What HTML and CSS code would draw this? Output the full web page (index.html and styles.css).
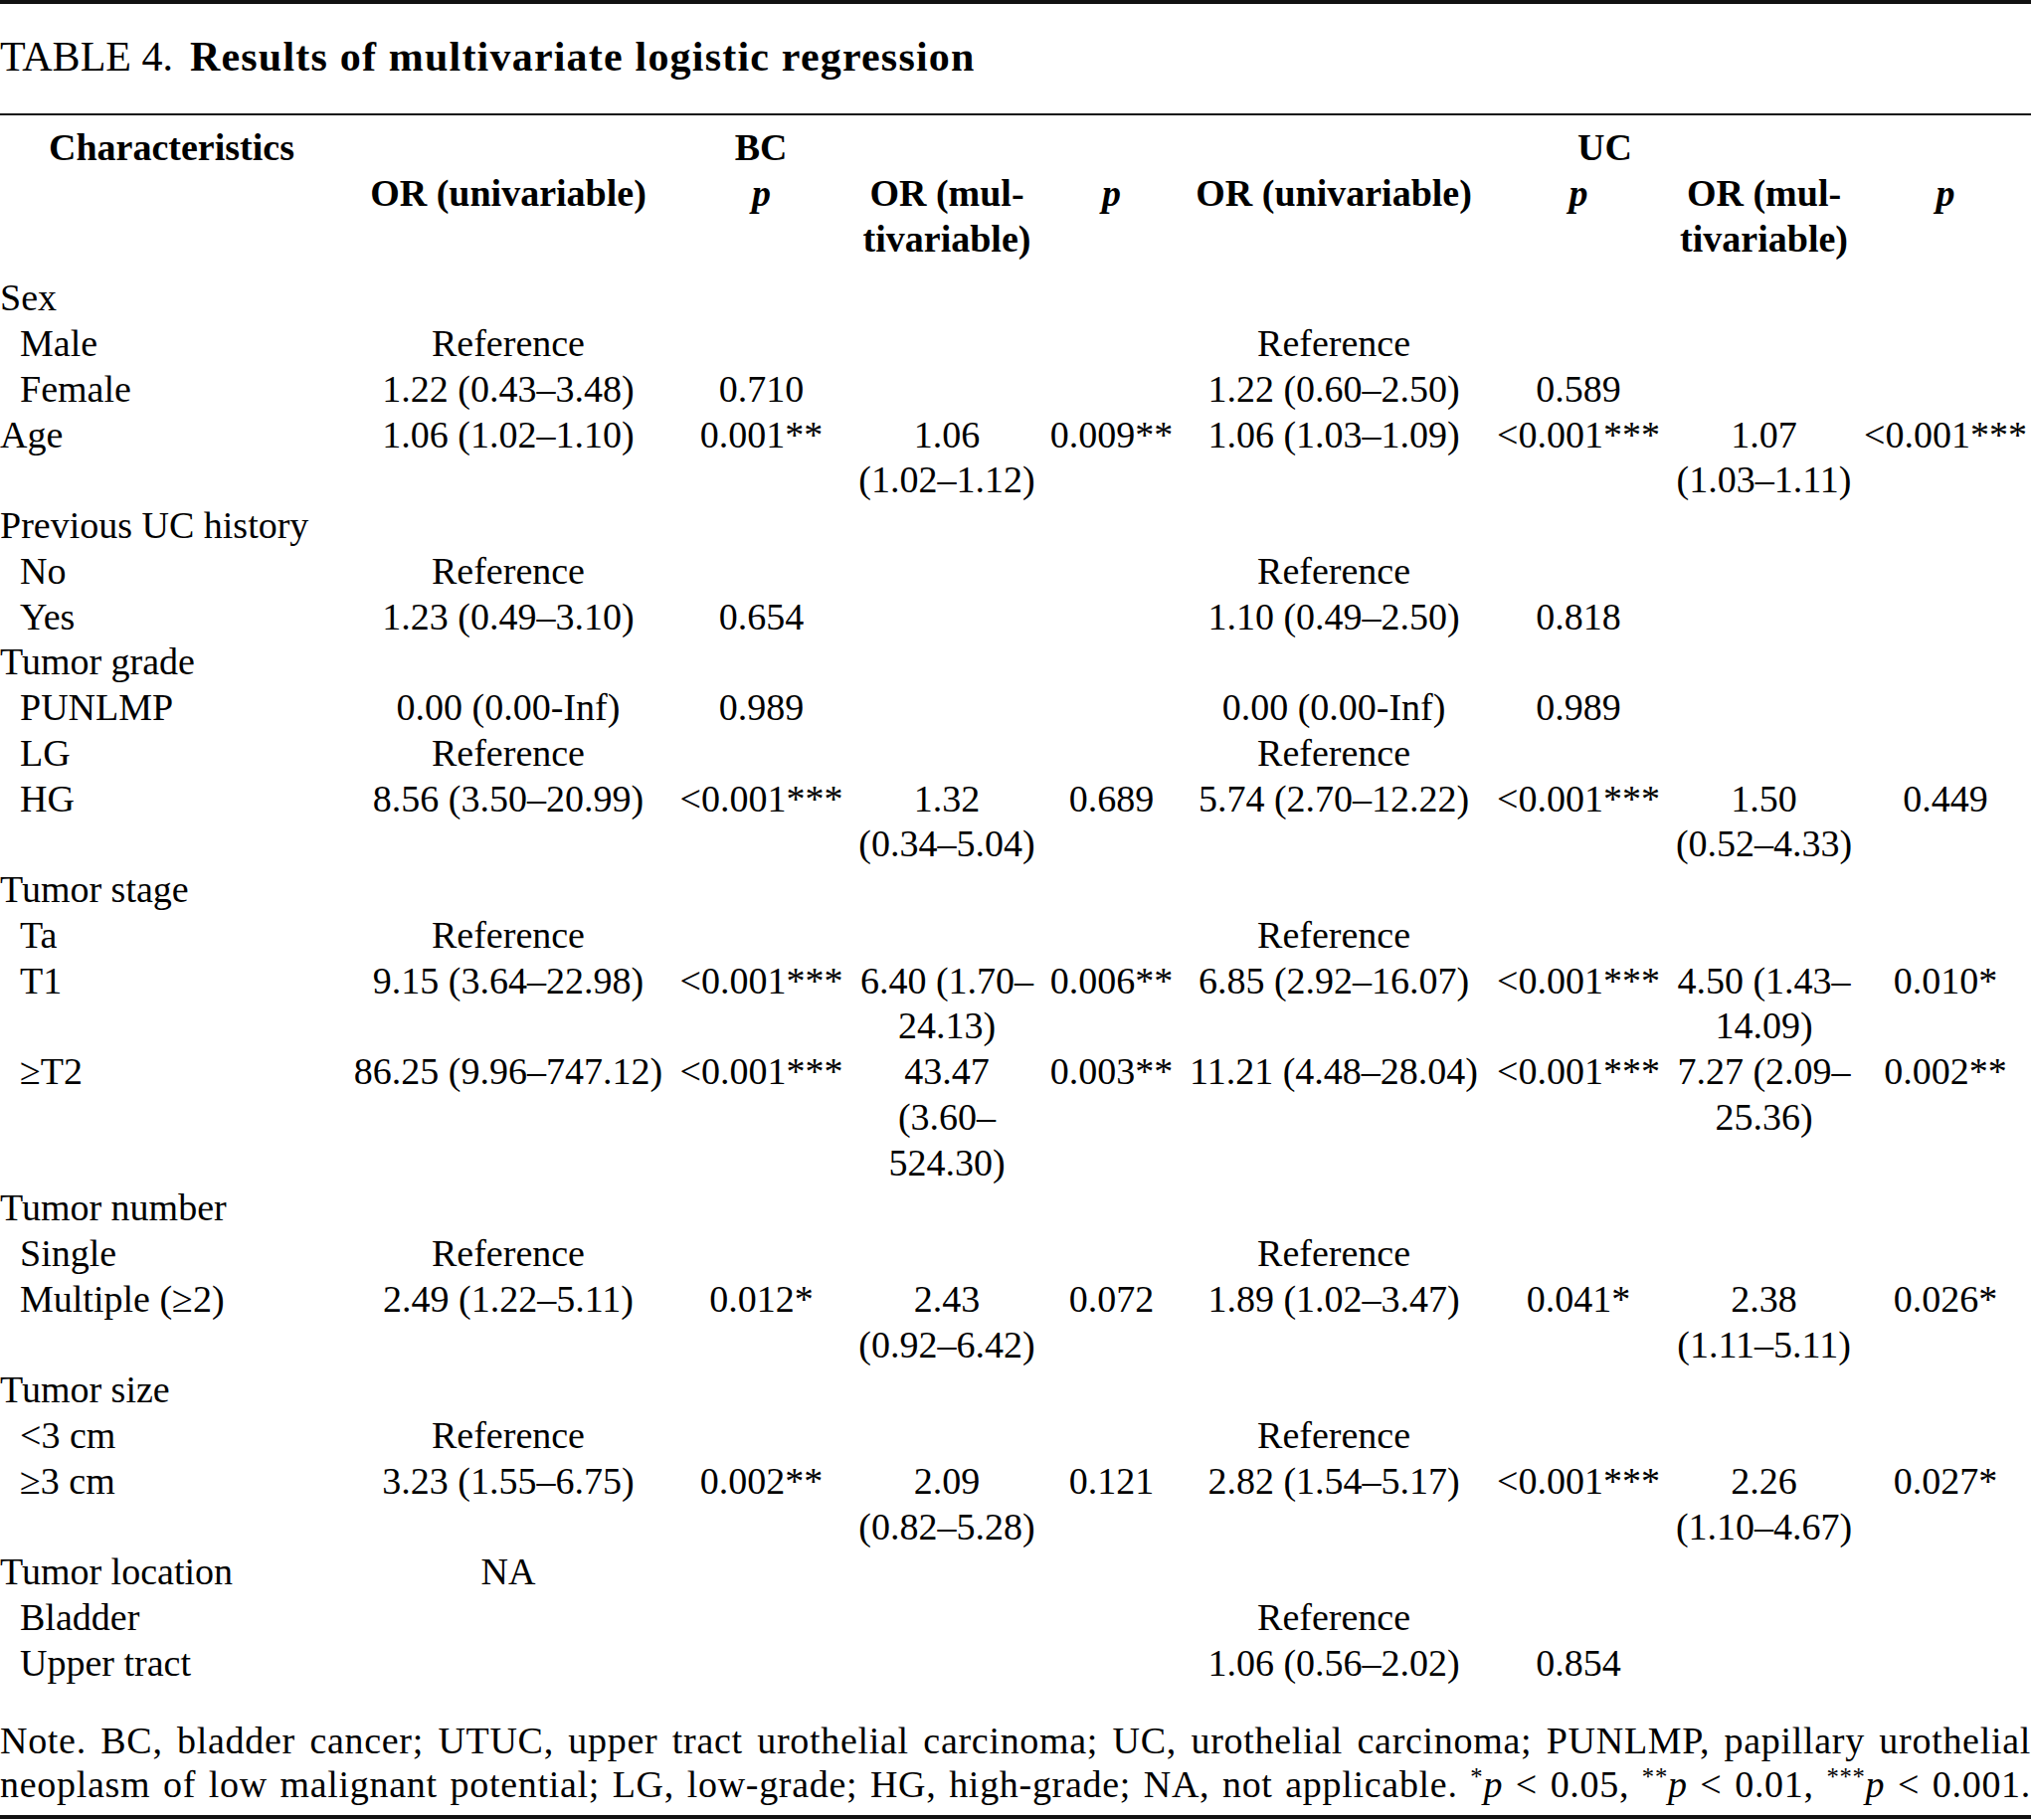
FILE: index.html
```html
<!DOCTYPE html>
<html lang="en">
<head>
<meta charset="utf-8">
<title>Table 4</title>
<link rel="stylesheet" href="styles.css">
</head>
<body>
<div class="tbl-block">
  <div class="caption"><span class="cap-label">TABLE 4.</span><span class="cap-title">Results of multivariate logistic regression</span></div>
  <table class="results">
    <colgroup>
      <col class="c1"><col class="c2"><col class="c3"><col class="c4"><col class="c5">
      <col class="c6"><col class="c7"><col class="c8"><col class="c9">
    </colgroup>
    <thead>
      <tr class="h1">
        <th>Characteristics</th>
        <th colspan="4">BC</th>
        <th colspan="4">UC</th>
      </tr>
      <tr class="h2">
        <th></th>
        <th>OR (univariable)</th>
        <th><i>p</i></th>
        <th>OR (mul-<br>tivariable)</th>
        <th><i>p</i></th>
        <th>OR (univariable)</th>
        <th><i>p</i></th>
        <th>OR (mul-<br>tivariable)</th>
        <th><i>p</i></th>
      </tr>
    </thead>
    <tbody>
      <tr><td>Sex</td><td></td><td></td><td></td><td></td><td></td><td></td><td></td><td></td></tr>
      <tr><td class="sub">Male</td><td>Reference</td><td></td><td></td><td></td><td>Reference</td><td></td><td></td><td></td></tr>
      <tr><td class="sub">Female</td><td>1.22 (0.43–3.48)</td><td>0.710</td><td></td><td></td><td>1.22 (0.60–2.50)</td><td>0.589</td><td></td><td></td></tr>
      <tr><td>Age</td><td>1.06 (1.02–1.10)</td><td>0.001**</td><td>1.06<br>(1.02–1.12)</td><td>0.009**</td><td>1.06 (1.03–1.09)</td><td>&lt;0.001***</td><td>1.07<br>(1.03–1.11)</td><td>&lt;0.001***</td></tr>
      <tr><td>Previous UC history</td><td></td><td></td><td></td><td></td><td></td><td></td><td></td><td></td></tr>
      <tr><td class="sub">No</td><td>Reference</td><td></td><td></td><td></td><td>Reference</td><td></td><td></td><td></td></tr>
      <tr><td class="sub">Yes</td><td>1.23 (0.49–3.10)</td><td>0.654</td><td></td><td></td><td>1.10 (0.49–2.50)</td><td>0.818</td><td></td><td></td></tr>
      <tr><td>Tumor grade</td><td></td><td></td><td></td><td></td><td></td><td></td><td></td><td></td></tr>
      <tr><td class="sub">PUNLMP</td><td>0.00 (0.00-Inf)</td><td>0.989</td><td></td><td></td><td>0.00 (0.00-Inf)</td><td>0.989</td><td></td><td></td></tr>
      <tr><td class="sub">LG</td><td>Reference</td><td></td><td></td><td></td><td>Reference</td><td></td><td></td><td></td></tr>
      <tr><td class="sub">HG</td><td>8.56 (3.50–20.99)</td><td>&lt;0.001***</td><td>1.32<br>(0.34–5.04)</td><td>0.689</td><td>5.74 (2.70–12.22)</td><td>&lt;0.001***</td><td>1.50<br>(0.52–4.33)</td><td>0.449</td></tr>
      <tr><td>Tumor stage</td><td></td><td></td><td></td><td></td><td></td><td></td><td></td><td></td></tr>
      <tr><td class="sub">Ta</td><td>Reference</td><td></td><td></td><td></td><td>Reference</td><td></td><td></td><td></td></tr>
      <tr><td class="sub">T1</td><td>9.15 (3.64–22.98)</td><td>&lt;0.001***</td><td>6.40 (1.70–<br>24.13)</td><td>0.006**</td><td>6.85 (2.92–16.07)</td><td>&lt;0.001***</td><td>4.50 (1.43–<br>14.09)</td><td>0.010*</td></tr>
      <tr><td class="sub">≥T2</td><td>86.25 (9.96–747.12)</td><td>&lt;0.001***</td><td>43.47<br>(3.60–<br>524.30)</td><td>0.003**</td><td>11.21 (4.48–28.04)</td><td>&lt;0.001***</td><td>7.27 (2.09–<br>25.36)</td><td>0.002**</td></tr>
      <tr><td>Tumor number</td><td></td><td></td><td></td><td></td><td></td><td></td><td></td><td></td></tr>
      <tr><td class="sub">Single</td><td>Reference</td><td></td><td></td><td></td><td>Reference</td><td></td><td></td><td></td></tr>
      <tr><td class="sub">Multiple (≥2)</td><td>2.49 (1.22–5.11)</td><td>0.012*</td><td>2.43<br>(0.92–6.42)</td><td>0.072</td><td>1.89 (1.02–3.47)</td><td>0.041*</td><td>2.38<br>(1.11–5.11)</td><td>0.026*</td></tr>
      <tr><td>Tumor size</td><td></td><td></td><td></td><td></td><td></td><td></td><td></td><td></td></tr>
      <tr><td class="sub">&lt;3 cm</td><td>Reference</td><td></td><td></td><td></td><td>Reference</td><td></td><td></td><td></td></tr>
      <tr><td class="sub">≥3 cm</td><td>3.23 (1.55–6.75)</td><td>0.002**</td><td>2.09<br>(0.82–5.28)</td><td>0.121</td><td>2.82 (1.54–5.17)</td><td>&lt;0.001***</td><td>2.26<br>(1.10–4.67)</td><td>0.027*</td></tr>
      <tr><td>Tumor location</td><td>NA</td><td></td><td></td><td></td><td></td><td></td><td></td><td></td></tr>
      <tr><td class="sub">Bladder</td><td></td><td></td><td></td><td></td><td>Reference</td><td></td><td></td><td></td></tr>
      <tr><td class="sub">Upper tract</td><td></td><td></td><td></td><td></td><td>1.06 (0.56–2.02)</td><td>0.854</td><td></td><td></td></tr>
    </tbody>
  </table>
  <p class="note">Note. BC, bladder cancer; UTUC, upper tract urothelial carcinoma; UC, urothelial carcinoma; PUNLMP, papillary urothelial<br>neoplasm of low malignant potential; LG, low-grade; HG, high-grade; NA, not applicable. <sup>*</sup><i>p</i> &lt; 0.05, <sup>**</sup><i>p</i> &lt; 0.01, <sup>***</sup><i>p</i> &lt; 0.001.</p>
</div>
</body>
</html>
```

FILE: styles.css
```css
html, body {
  margin: 0;
  padding: 0;
  background: #fff;
}

body {
  width: 2042px;
  font-family: "Liberation Serif", "Times New Roman", serif;
  font-size: 38px;
  color: #000;
}

.tbl-block {
  border-top: 4px solid #111;
  border-bottom: 4px solid #111;
}

.caption {
  padding: 31px 0 34px 0;
  line-height: 45px;
  font-size: 42px;
  white-space: nowrap;
}

.cap-title {
  font-weight: bold;
  letter-spacing: 1.2px;
  margin-left: 17px;
}

.results {
  width: 2042px;
  table-layout: fixed;
  border-collapse: collapse;
  border-top: 2px solid #111;
}

.c1 { width: 345px; }
.c2 { width: 332px; }
.c3 { width: 177px; }
.c4 { width: 196px; }
.c5 { width: 135px; }
.c6 { width: 312px; }
.c7 { width: 180px; }
.c8 { width: 193px; }
.c9 { width: 172px; }

.results th,
.results td {
  padding: 0;
  line-height: 45.75px;
  vertical-align: top;
  white-space: nowrap;
  text-align: center;
}

.results th {
  font-weight: bold;
}

.results tr.h1 th {
  padding-top: 10px;
}

.results tr.h2 th {
  padding-bottom: 14px;
}

.results td:first-child {
  text-align: left;
}

.results td.sub {
  padding-left: 20px;
}

.note {
  margin: 0;
  padding: 32px 0 9px 0;
  line-height: 44px;
  letter-spacing: 0.7px;
  text-align: justify;
  text-align-last: justify;
}

.note sup {
  font-size: 0.65em;
  line-height: 0;
  vertical-align: 0.5em;
}
```
